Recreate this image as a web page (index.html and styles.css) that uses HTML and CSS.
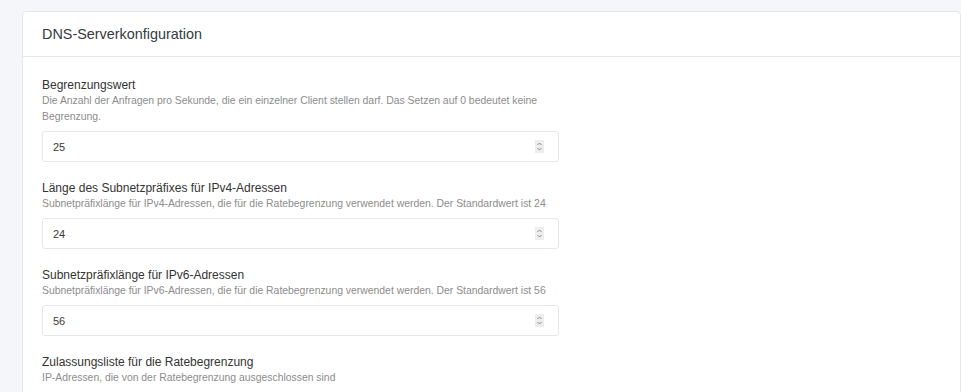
FILE: index.html
```html
<!DOCTYPE html>
<html lang="de">
  <head>
    <meta charset="UTF-8" />
    <meta name="viewport" content="width=device-width, initial-scale=1.0" />
    <title>DNS-Serverkonfiguration</title>
    <link rel="stylesheet" href="styles.css">
  </head>
  <body>
    <div class="card">
      <div class="card-header">DNS-Serverkonfiguration</div>
      <div class="card-body">
        <div class="form-group">
          <label class="form-label" for="ratelimit">Begrenzungswert</label>
          <div class="form-desc">
            Die Anzahl der Anfragen pro Sekunde, die ein einzelner Client stellen darf. Das Setzen auf 0 bedeutet keine Begrenzung.
          </div>
          <div class="input-wrap">
            <input class="form-input" id="ratelimit" type="number" value="25" />
            <span class="spinner">
              <svg width="9" height="13" viewBox="0 0 9 13"><path d="M2.5 5 L4.5 3 L6.5 5 M2.5 8 L4.5 10 L6.5 8" fill="none" stroke="#8a8a8a" stroke-width="1"/></svg>
            </span>
          </div>
        </div>

        <div class="form-group">
          <label class="form-label" for="ipv4">Länge des Subnetzpräfixes für IPv4-Adressen</label>
          <div class="form-desc">
            Subnetpräfixlänge für IPv4-Adressen, die für die Ratebegrenzung verwendet werden. Der Standardwert ist 24
          </div>
          <div class="input-wrap">
            <input class="form-input" id="ipv4" type="number" value="24" />
            <span class="spinner">
              <svg width="9" height="13" viewBox="0 0 9 13"><path d="M2.5 5 L4.5 3 L6.5 5 M2.5 8 L4.5 10 L6.5 8" fill="none" stroke="#8a8a8a" stroke-width="1"/></svg>
            </span>
          </div>
        </div>

        <div class="form-group">
          <label class="form-label" for="ipv6">Subnetzpräfixlänge für IPv6-Adressen</label>
          <div class="form-desc">
            Subnetpräfixlänge für IPv6-Adressen, die für die Ratebegrenzung verwendet werden. Der Standardwert ist 56
          </div>
          <div class="input-wrap">
            <input class="form-input" id="ipv6" type="number" value="56" />
            <span class="spinner">
              <svg width="9" height="13" viewBox="0 0 9 13"><path d="M2.5 5 L4.5 3 L6.5 5 M2.5 8 L4.5 10 L6.5 8" fill="none" stroke="#8a8a8a" stroke-width="1"/></svg>
            </span>
          </div>
        </div>

        <div class="form-group">
          <label class="form-label" for="allowlist">Zulassungsliste für die Ratebegrenzung</label>
          <div class="form-desc">IP-Adressen, die von der Ratebegrenzung ausgeschlossen sind</div>
        </div>
      </div>
    </div>
  </body>
</html>
```

FILE: styles.css
```css
body {
  margin: 0;
  padding: 11px 0 0 22px;
  background: #f5f6fa;
  font-family: "Liberation Sans", Arial, sans-serif;
  color: #333;
  overflow: hidden;
  height: 100vh;
  box-sizing: border-box;
}

/* Karte */
.card {
  width: 939px;
  box-sizing: border-box;
  background: #fff;
  border: 1px solid #e4e7ed;
  border-radius: 4px;
}

.card-header {
  height: 44px;
  padding: 0 19px;
  display: flex;
  align-items: center;
  font-size: 14.4px;
  color: #343a40;
  border-bottom: 1px solid #e4e7ed;
}

.card-body {
  padding: 20px 19px;
}

.form-group {
  display: flex;
  flex-direction: column;
  margin-bottom: 18px;
}

.form-label {
  font-size: 12px;
  line-height: 16px;
  color: #333;
}

.form-desc {
  font-size: 10.4px;
  line-height: 16px;
  color: #8c8c8c;
  max-width: 515px;
}

.input-wrap {
  position: relative;
  margin-top: 6px;
  width: 517px;
}

.form-input {
  display: block;
  width: 100%;
  height: 31px;
  box-sizing: border-box;
  padding: 0 30px 0 10px;
  font-family: "Liberation Sans", Arial, sans-serif;
  font-size: 11px;
  color: #3a3a3a;
  border: 1px solid #e4e7ed;
  border-radius: 3px;
  outline: none;
  -moz-appearance: textfield;
}

.form-input::-webkit-inner-spin-button,
.form-input::-webkit-outer-spin-button {
  -webkit-appearance: none;
  margin: 0;
}

/* Zahlen-Pfeile */
.spinner {
  position: absolute;
  top: 9px;
  right: 15px;
  width: 9px;
  height: 13px;
  background: #ededed;
  display: flex;
}
```
